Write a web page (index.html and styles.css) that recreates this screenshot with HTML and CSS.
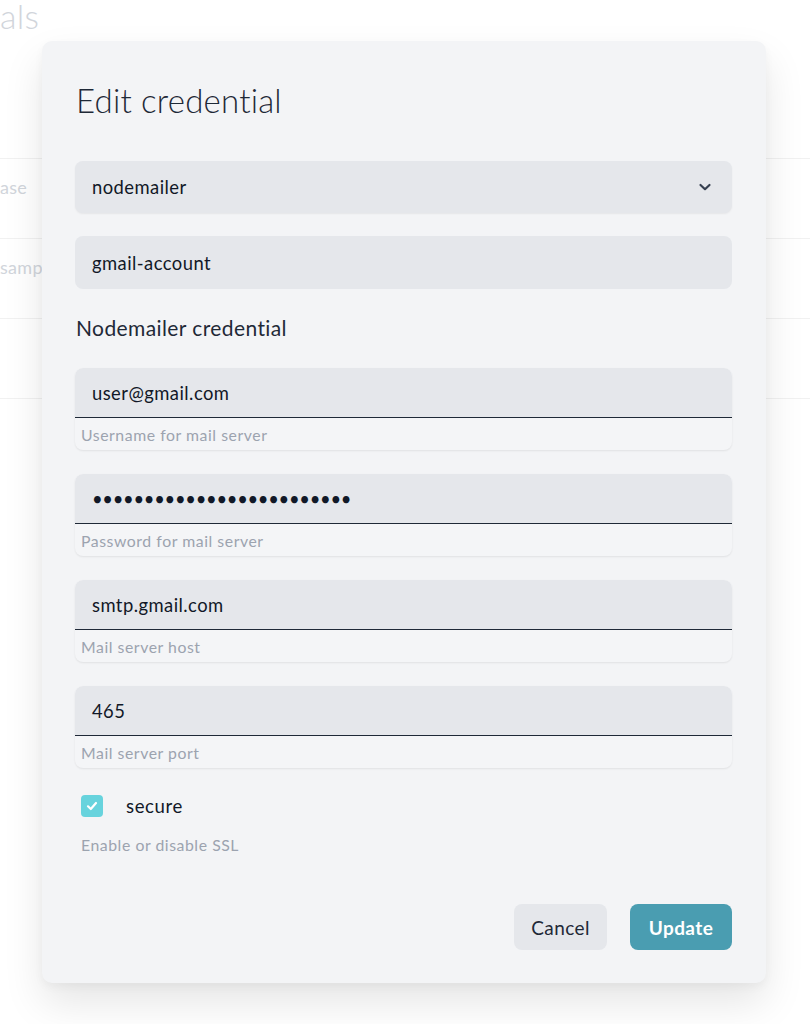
FILE: index.html
```html
<!DOCTYPE html>
<html>
<head>
<meta charset="utf-8">
<link rel="stylesheet" href="styles.css">
</head>
<body>
<div class="page">
  <div class="page-title">als</div>
  <div class="table">
    <div class="row"><span class="cell">ase</span></div>
    <div class="row"><span class="cell">samp</span></div>
    <div class="row"></div>
    <div class="row"></div>
  </div>
</div>
<div class="modal">
  <h1 class="title">Edit credential</h1>
  <div class="select">
    <span>nodemailer</span>
    <svg class="chev" width="14" height="10" viewBox="0 0 14 10"><path d="M2.5 3 L7 7.2 L11.5 3" fill="none" stroke="#374151" stroke-width="2.2" stroke-linecap="round" stroke-linejoin="round"/></svg>
  </div>
  <div class="input plain">gmail-account</div>
  <h2 class="section">Nodemailer credential</h2>
  <div class="field">
    <div class="input">user@gmail.com</div>
    <div class="help">Username for mail server</div>
  </div>
  <div class="field">
    <div class="input dots">•••••••••••••••••••••••••</div>
    <div class="help">Password for mail server</div>
  </div>
  <div class="field">
    <div class="input">smtp.gmail.com</div>
    <div class="help">Mail server host</div>
  </div>
  <div class="field">
    <div class="input">465</div>
    <div class="help">Mail server port</div>
  </div>
  <div class="check">
    <span class="box"><svg width="14" height="14" viewBox="0 0 14 14"><path d="M3 7.3 L5.8 10 L11 4" fill="none" stroke="#fff" stroke-width="2.2" stroke-linecap="round" stroke-linejoin="round"/></svg></span>
    <span class="check-label">secure</span>
  </div>
  <div class="check-help">Enable or disable SSL</div>
  <div class="actions">
    <button class="btn cancel">Cancel</button>
    <button class="btn update">Update</button>
  </div>
</div>
</body>
</html>
```
FILE: styles.css
```css
html, body { margin: 0; padding: 0; }
*, *::before, *::after { box-sizing: border-box; }
body {
  width: 810px; height: 1024px; overflow: hidden; position: relative;
  background: #fff;
  font-family: Lato, "Noto Sans", sans-serif;
  color: #1f2937;
}
.page-title { font-size: 34px; font-weight: 300; color: #d1d5db; line-height: 32px; height: 32px; letter-spacing: 0.3px; }
.table { margin-top: 126px; }
.row { height: 80px; border-top: 1px solid #f1f1f1; display: flex; align-items: flex-start; padding-top: 17px; }
.cell { font-size: 18px; line-height: 22px; color: #d1d5db; letter-spacing: 0.3px; }
.modal {
  position: absolute; left: 42px; top: 41px; width: 724px; height: 942px;
  padding: 0 34px 0 33px;
  background: #f3f4f6; border-radius: 10px;
  box-shadow: 0 20px 40px rgba(0,0,0,0.10), 0 4px 10px rgba(0,0,0,0.04);
}
.title { margin: 39px 0 0 1px; font-size: 33px; font-weight: 300; line-height: 40px; color: #1f2937; letter-spacing: 0.2px; }
.select {
  margin-top: 41px; height: 52px; border-radius: 8px; background: #e5e7eb;
  display: flex; align-items: center; justify-content: space-between;
  padding: 0 20px 0 17px; font-size: 18.4px; letter-spacing: 0.45px; color: #111827;
  box-shadow: 0 1px 2px rgba(0,0,0,0.06);
}
.chev { display: block; }
.input {
  height: 50px; background: #e5e7eb; display: flex; align-items: center;
  padding: 0 17px; font-size: 18.4px; letter-spacing: 0.45px; color: #111827;
}
.input.plain { margin-top: 23px; height: 53px; border-radius: 8px; }
.section { margin: 26px 0 0 1px; font-size: 21px; font-weight: 400; line-height: 26px; color: #1f2937; letter-spacing: 0.4px; }
.field {
  margin-top: 24px; border-radius: 8px; background: #f4f5f7;
  box-shadow: 0 1px 2px rgba(0,0,0,0.08);
  overflow: hidden;
}
.section + .field { margin-top: 27px; }
.field .input { border-radius: 8px 8px 0 0; border-bottom: 1.6px solid #1f2937; height: 50px; }
.help { height: 32px; display: flex; align-items: center; padding: 0 6px; font-size: 15.8px; letter-spacing: 0.55px; color: #9ca3af; }
.input.dots { font-size: 18.4px; letter-spacing: -0.3px; color: #111827; }
.check { display: flex; align-items: center; margin-top: 26px; padding-left: 6px; height: 24px; }
.box {
  width: 22px; height: 22px; border-radius: 4px; background: #67d3dd;
  display: flex; align-items: center; justify-content: center;
}
.box svg { display: block; }
.check-label { margin-left: 23px; font-size: 18.6px; letter-spacing: 0.6px; color: #111827; }
.check-help { margin-top: 17px; padding-left: 6px; font-size: 15.8px; letter-spacing: 0.55px; color: #9ca3af; line-height: 20px; }
.actions { display: flex; justify-content: flex-end; gap: 23px; margin-top: 49px; }
.btn {
  height: 46px; border: none; border-radius: 8px; font-family: inherit; font-size: 19px; letter-spacing: 0.4px;
  padding: 0;
}
.cancel { background: #e5e7eb; color: #1f2937; width: 93px; }
.update { background: #4a9db1; color: #fff; font-weight: 700; width: 102px; }
```
